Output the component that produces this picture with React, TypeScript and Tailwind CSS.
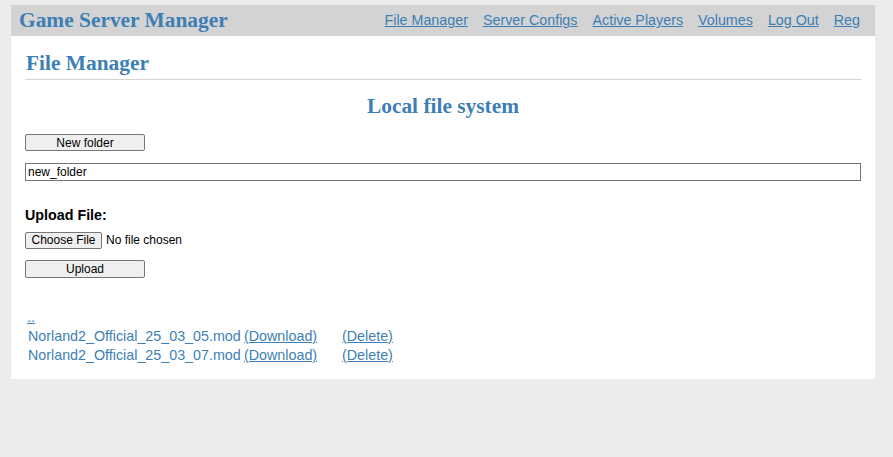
import React from "react";

const serif = { fontFamily: '"Liberation Serif", "Times New Roman", serif' };

export default function App() {
  const navs = ["File Manager", "Server Configs", "Active Players", "Volumes", "Log Out", "Reg"];
  const files = ["Norland2_Official_25_03_05.mod", "Norland2_Official_25_03_07.mod"];
  const btn =
    "h-[17px] border border-[#767676] bg-[#efefef] rounded-[2px] text-[12px] leading-none text-black";
  return (
    <div
      className="min-h-screen bg-[#ececec] pt-[5px] text-black"
      style={{ fontFamily: '"Liberation Sans", Arial, sans-serif' }}
    >
      <div className="ml-[11px] w-[864px] bg-white pb-[14px]">
        <div className="flex h-[31px] items-center justify-between bg-[#d3d3d3] pl-[8px] pr-[15px]">
          <div className="text-[21.4px] font-bold leading-none text-[#3d7fb4]" style={serif}>
            Game Server Manager
          </div>
          <div className="flex gap-[15px] text-[14.3px] pt-[1px]">
            {navs.map((n) => (
              <a key={n} href="#" className="text-[#3d7fb4] underline">
                {n}
              </a>
            ))}
          </div>
        </div>
        <div className="px-[14px]">
          <h2
            className="pt-[15px] pl-[1px] text-[21.4px] font-bold leading-[24px] text-[#3d7fb4]"
            style={serif}
          >
            File Manager
          </h2>
          <div className="mt-[4px] h-px bg-[#d3d3d3]" />
          <h3
            className="mt-[14px] text-center text-[21.4px] font-bold leading-[24px] text-[#3d7fb4]"
            style={serif}
          >
            Local file system
          </h3>
          <button className={`${btn} mt-[16px] block w-[120px]`}>New folder</button>
          <input
            className="mt-[12px] block h-[18px] w-full border border-[#767676] px-[2px] text-[12px] outline-none"
            defaultValue="new_folder"
          />
          <div className="mt-[26px] text-[14.3px] font-bold leading-[16px]">Upload File:</div>
          <div className="mt-[8px] flex items-center gap-[4px]">
            <button className={`${btn} w-[77px]`}>Choose File</button>
            <span className="text-[12px]">No file chosen</span>
          </div>
          <button className={`${btn} mt-[11px] block h-[18px] w-[120px]`}>Upload</button>
          <div className="mt-[30px] text-[14.3px] leading-[19px]">
            <div className="pl-[2px]">
              <a href="#" className="text-[#3d7fb4] underline">
                ..
              </a>
            </div>
            {files.map((f) => (
              <div key={f} className="flex pl-[3px]">
                <span className="w-[216px] text-[#3d7fb4]">{f}</span>
                <a href="#" className="w-[98px] text-[#3d7fb4] underline">
                  (Download)
                </a>
                <a href="#" className="text-[#3d7fb4] underline">
                  (Delete)
                </a>
              </div>
            ))}
          </div>
        </div>
      </div>
    </div>
  );
}
